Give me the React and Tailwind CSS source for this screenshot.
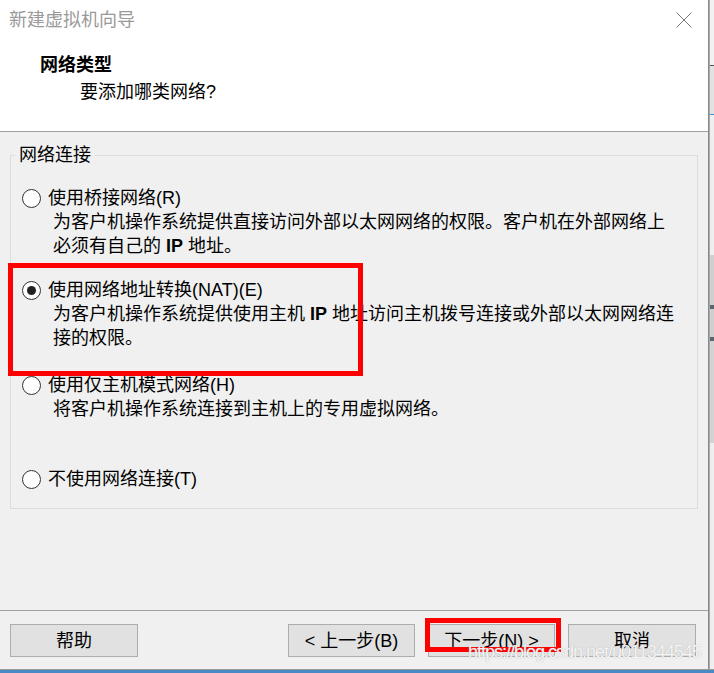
import React from 'react';

const FONT = "font-['Liberation_Sans','Noto_Sans_CJK_SC',sans-serif]";

// Windows-style radio button
const Radio = ({ checked }) => (
  <span className="w-[19px] h-[19px] rounded-full border border-[#333] bg-white flex items-center justify-center shrink-0">
    {checked && <span className="w-[9px] h-[9px] rounded-full bg-[#222]" />}
  </span>
);

const Option = ({ label, lines = [], checked = false, className = '' }) => (
  <div className={className}>
    <div className="flex items-center h-[24px] pl-[11px] gap-[7px]">
      <Radio checked={checked} />
      <span className="text-[18px] leading-[24px] whitespace-nowrap">{label}</span>
    </div>
    {lines.map((line, i) => (
      <div key={i} className="pl-[42px] text-[18px] leading-[24px] whitespace-nowrap">
        {line}
      </div>
    ))}
  </div>
);

const Button = ({ children, className = '' }) => (
  <button className={`h-[33px] bg-[#e1e1e1] border border-[#adadad] text-[18px] leading-[24px] text-black flex items-center justify-center ${className}`}>
    {children}
  </button>
);

const App = () => {
  return (
    <div className={`relative w-[714px] h-[673px] flex flex-col overflow-hidden text-black ${FONT}`}>
      <div className="flex h-[669px]">
        {/* Dialog */}
        <div className="w-[709px] flex flex-col border-r border-[#8a8a8a] bg-[#f0f0f0]">
          {/* Header */}
          <div className="h-[132px] bg-white border-b border-[#a0a0a0]">
            <div className="h-[40px] flex items-center justify-between pl-[9px] pr-[16px]">
              <span className="text-[18px] leading-[24px] text-[#999]">新建虚拟机向导</span>
              <svg width="16" height="16" viewBox="0 0 16 16" className="mt-[-1px]">
                <path d="M0.5 0.5 L15.5 15.5 M15.5 0.5 L0.5 15.5" stroke="#777" strokeWidth="1" fill="none" />
              </svg>
            </div>
            <div className="mt-[13px] pl-[40px] text-[18px] leading-[24px] font-bold">网络类型</div>
            <div className="mt-[3px] pl-[80px] text-[18px] leading-[24px]">要添加哪类网络?</div>
          </div>

          {/* Body */}
          <div className="h-[478px]">
            <fieldset className="mt-[11px] mx-[10px] border border-[#dcdcdc] pt-[19px] pb-[17px]">
              <legend className="ml-[4px] px-[4px] text-[18px] leading-[24px]">网络连接</legend>
              <Option
                label="使用桥接网络(R)"
                lines={[
                  '为客户机操作系统提供直接访问外部以太网网络的权限。客户机在外部网络上',
                  <>必须有自己的 <span className="font-bold">IP</span> 地址。</>,
                ]}
              />
              <Option
                className="mt-[20px]"
                checked
                label="使用网络地址转换(NAT)(E)"
                lines={[
                  <>为客户机操作系统提供使用主机 <span className="font-bold">IP</span> 地址访问主机拨号连接或外部以太网网络连</>,
                  '接的权限。',
                ]}
              />
              <Option
                className="mt-[23px]"
                label="使用仅主机模式网络(H)"
                lines={['将客户机操作系统连接到主机上的专用虚拟网络。']}
              />
              <Option className="mt-[46px]" label="不使用网络连接(T)" />
            </fieldset>
          </div>

          {/* Footer */}
          <div className="h-[59px] border-t border-[#a0a0a0] pt-[13px] pl-[10px] pr-[12px] flex items-start">
            <Button className="w-[128px]">帮助</Button>
            <div className="flex-1" />
            <Button className="w-[127px]">&lt; 上一步(B)</Button>
            <Button className="w-[127px] ml-[13px]">下一步(N) &gt;</Button>
            <Button className="w-[128px] ml-[13px]">取消</Button>
          </div>
        </div>

        {/* Background window peeking out on the right */}
        <div className="w-[5px] flex flex-col border-l border-[#a8a8a8]">
          <div className="h-[65px] bg-[#f2f2f2]" />
          <div className="h-[1px] bg-[#555]" />
          <div className="h-[48px] bg-[#e2e2e2]" />
          <div className="h-[1px] bg-[#3c8fd6]" />
          <div className="h-[140px] bg-[#efefef]" />
          <div className="h-[50px] bg-[#cfcfcf]" />
          <div className="h-[4px] bg-[#5a6570]" />
          <div className="h-[28px] bg-[#cfcfcf]" />
          <div className="h-[4px] bg-[#5a6570]" />
          <div className="h-[102px] bg-[#d3d3d3]" />
          <div className="flex-1 bg-[#efefef]" />
        </div>
      </div>
      <div className="h-[1px] bg-[#9a9a9a]" />
      <div className="h-[3px] bg-[#4a8ac4]" />

      {/* Annotations */}
      <div className="absolute left-[8px] top-[263px] w-[355px] h-[113px] border-[5px] border-[#ff0000]" />
      <div className="absolute left-[425px] top-[618px] w-[136px] h-[34px] border-[5px] border-[#ff0000]" />

      {/* Watermark */}
      <div className="absolute left-[468px] top-[642px] text-[18px] leading-[20px] tracking-[-1px] text-white/90 whitespace-nowrap font-['Liberation_Sans',sans-serif] [text-shadow:0_0_1px_#9a9a9a]">
        https://blog.csdn.net/u011344545
      </div>
    </div>
  );
};

export default App;
